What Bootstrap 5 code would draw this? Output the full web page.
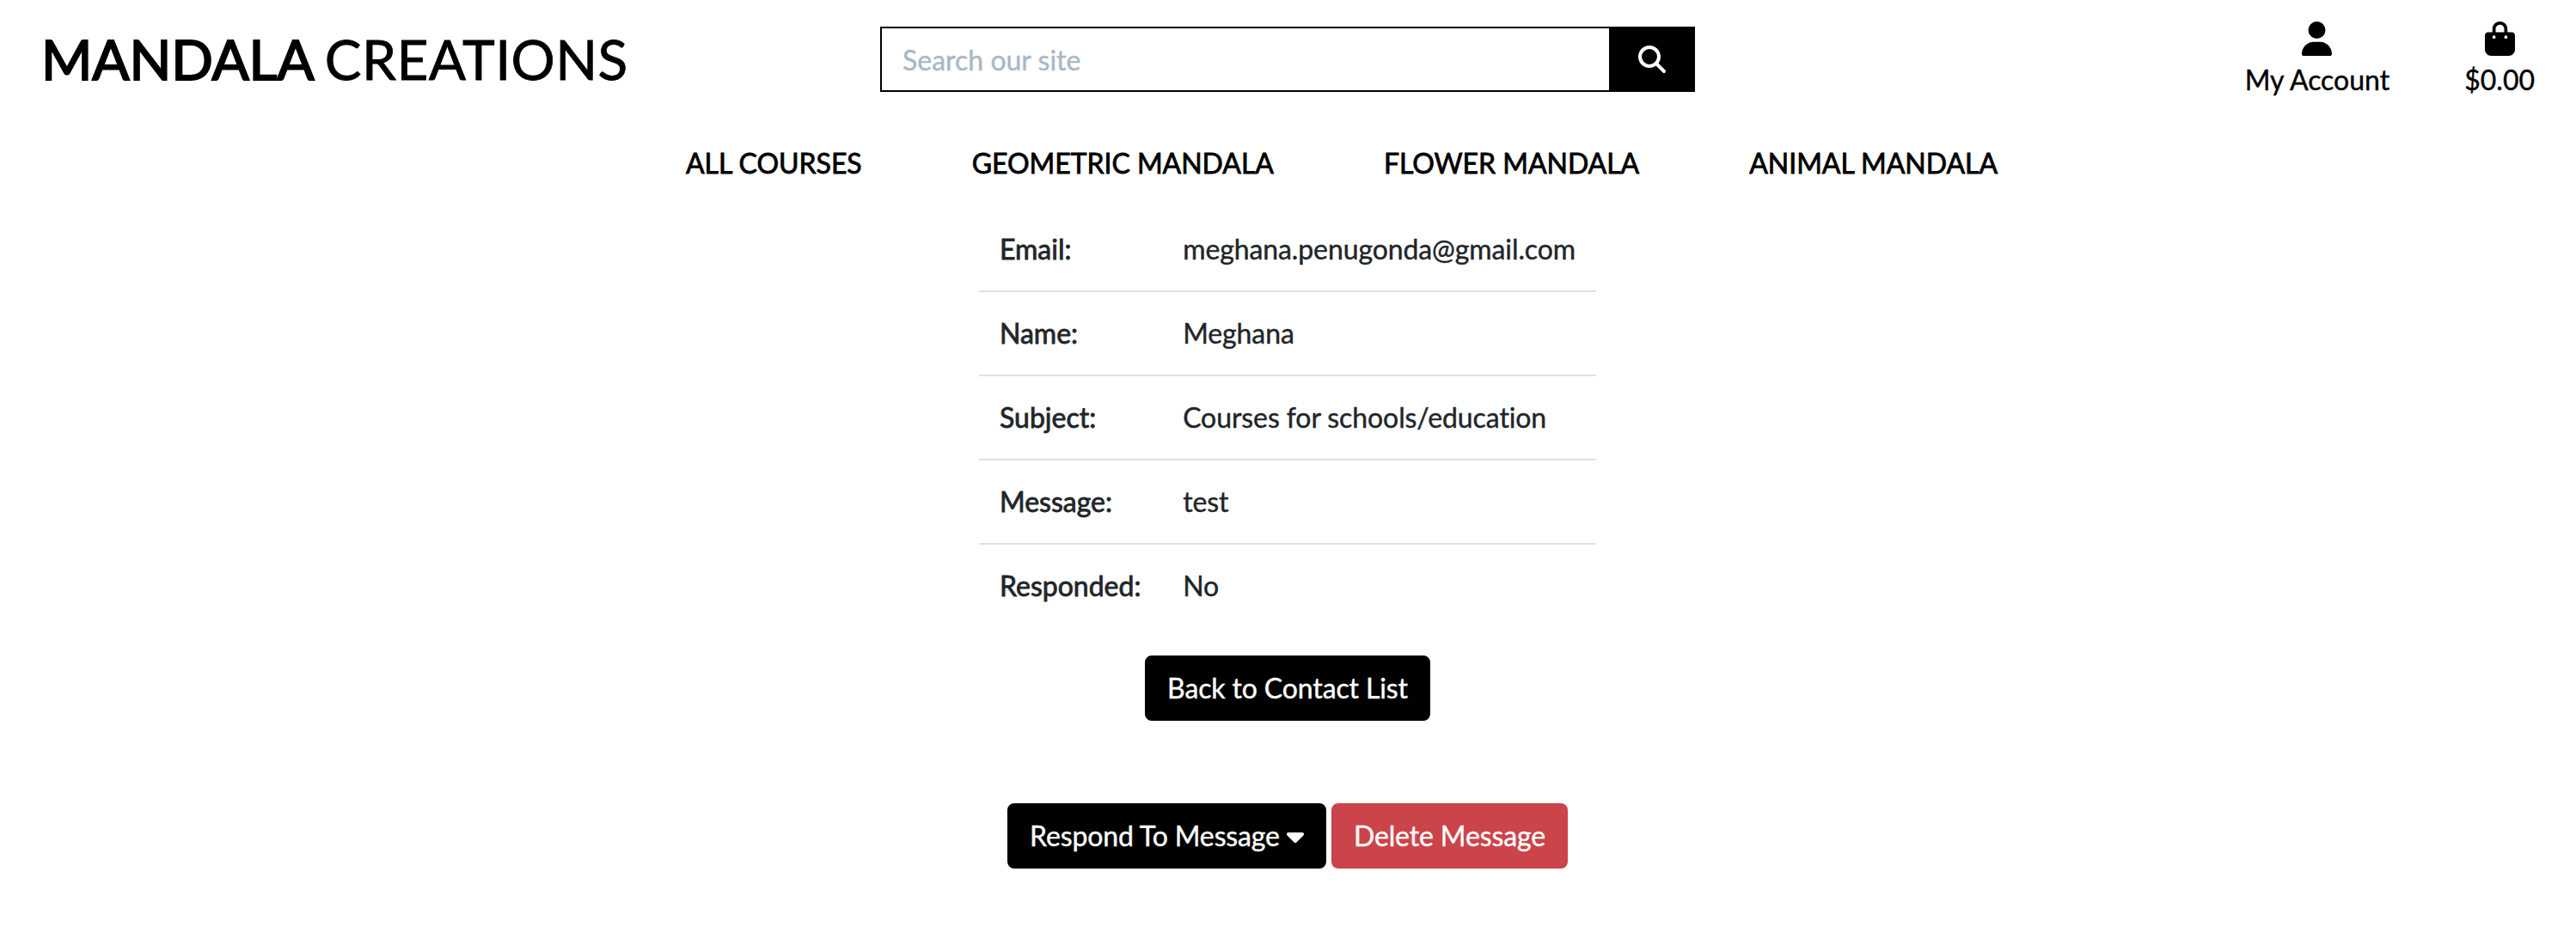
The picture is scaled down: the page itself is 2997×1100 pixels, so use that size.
<!DOCTYPE html>
<html lang="en">
<head>
<meta charset="utf-8">
<meta name="viewport" content="width=device-width, initial-scale=1">
<title>Mandala Creations</title>
<link href="https://cdn.jsdelivr.net/npm/bootstrap@5.3.0/dist/css/bootstrap.min.css" rel="stylesheet">
<style>
html { font-size: 32px; }
body { font-family: Lato, sans-serif; color: #212529; background: #fff; overflow-x: hidden; font-variant-ligatures: none; -webkit-text-stroke: .4px currentColor; }
svg { fill: currentColor; display: block; }
.heavy { font-weight: 400; -webkit-text-stroke: .8px currentColor; }
.top-bar { height: 141px; padding: 0 48px; }
.brand-link { font-size: 64px; line-height: 76px; color: #000; padding-top: 31px; white-space: nowrap; word-spacing: -4.5px; letter-spacing: .4px; -webkit-text-stroke-width: .8px; }
.brand-link .heavy { -webkit-text-stroke-width: 2px; letter-spacing: -.15px; }
.side-area { flex: 1 1 0; min-width: 0; }
.search-form { width: 948px; padding-top: 31px; margin-right: 1px; }
.search-form .form-control { height: 76px; border: 2px solid #000; border-right: 0; border-radius: 0; padding: 12px 24px; }
.search-form .form-control::placeholder { color: #aab7c4; opacity: 1; }
.search-form .btn { width: 100px; margin: 0; border: 0; border-radius: 0; }
.account-links { padding-top: 25px; gap: 87px; }
.account-links a { color: #000; line-height: 48px; }
.account-links svg { width: 35px; height: 40px; margin-bottom: 4px; }
.main-nav { height: 101px; padding: 25px 0 0 798px; gap: 128px; letter-spacing: -.04px; }
.main-nav a { color: #000; line-height: 48px; white-space: nowrap; }
.message-detail { padding-right: 1px; }
.detail-table { width: 718px; margin-bottom: 31px; }
.detail-table > tbody > tr > * { padding: 24px; border-width: 0 0 2px; border-color: #dee2e6; line-height: 48px; white-space: nowrap; color: #212529; }
.detail-table > tbody > tr:last-child > * { border-color: transparent; }
.detail-table th { width: 214px; }
.detail-table td { letter-spacing: -.1px; }
.action-btn { border-width: 2px; border-radius: 8px; line-height: 48px; padding: 12px 24px; white-space: nowrap; letter-spacing: -.13px; }
.btn-ink, .btn-ink:hover { background: #000; border-color: #000; color: #fff; }
.btn-remove, .btn-remove:hover { background: #cb444a; border-color: #cb444a; color: #fff; }
.caret { width: 20px; height: 32px; }
.reply-actions { gap: 6px; }
</style>
</head>
<body>
<header>
  <div class="top-bar d-flex align-items-start">
    <div class="side-area">
      <a href="#" class="brand-link d-block text-decoration-none"><span class="heavy">MANDALA</span> CREATIONS</a>
    </div>
    <form class="search-form">
      <div class="input-group">
        <input class="form-control" type="text" placeholder="Search our site" aria-label="Search our site">
        <button class="btn btn-ink d-flex align-items-center justify-content-center" type="button" aria-label="Search">
          <svg width="32" height="32" viewBox="0 0 512 512"><path d="M416 208c0 45.9-14.9 88.3-40 122.7L502.6 457.4c12.5 12.5 12.5 32.8 0 45.3s-32.8 12.5-45.3 0L330.7 376c-34.4 25.2-76.8 40-122.7 40C93.1 416 0 322.9 0 208S93.1 0 208 0S416 93.1 416 208zM208 352a144 144 0 1 0 0-288 144 144 0 1 0 0 288z"/></svg>
        </button>
      </div>
    </form>
    <div class="side-area account-links d-flex justify-content-end">
      <a href="#" class="d-flex flex-column align-items-center text-decoration-none">
        <svg viewBox="0 0 448 512"><path d="M224 256A128 128 0 1 0 224 0a128 128 0 1 0 0 256zm-45.7 48C79.8 304 0 383.8 0 482.3C0 498.7 13.3 512 29.7 512H418.3c16.4 0 29.7-13.3 29.7-29.7C448 383.8 368.2 304 269.7 304H178.3z"/></svg>
        My Account
      </a>
      <a href="#" class="d-flex flex-column align-items-center text-decoration-none">
        <svg viewBox="0 0 448 512"><path d="M160 112c0-35.3 28.7-64 64-64s64 28.7 64 64v48H160V112zm-48 48H48c-26.5 0-48 21.5-48 48V416c0 53 43 96 96 96H352c53 0 96-43 96-96V208c0-26.5-21.5-48-48-48H336V112C336 50.1 285.9 0 224 0S112 50.1 112 112v48zm24 48a24 24 0 1 1 0 48 24 24 0 1 1 0-48zm152 24a24 24 0 1 1 48 0 24 24 0 1 1 -48 0z"/></svg>
        $0.00
      </a>
    </div>
  </div>
  <nav class="main-nav d-flex align-items-start">
    <a href="#" class="heavy text-decoration-none">ALL COURSES</a>
    <a href="#" class="heavy text-decoration-none">GEOMETRIC MANDALA</a>
    <a href="#" class="heavy text-decoration-none">FLOWER MANDALA</a>
    <a href="#" class="heavy text-decoration-none">ANIMAL MANDALA</a>
  </nav>
</header>
<main class="message-detail d-flex flex-column align-items-center">
  <table class="table detail-table">
    <tbody>
      <tr><th class="heavy" scope="row">Email:</th><td>meghana.penugonda@gmail.com</td></tr>
      <tr><th class="heavy" scope="row">Name:</th><td>Meghana</td></tr>
      <tr><th class="heavy" scope="row">Subject:</th><td>Courses for schools/education</td></tr>
      <tr><th class="heavy" scope="row">Message:</th><td>test</td></tr>
      <tr><th class="heavy" scope="row">Responded:</th><td>No</td></tr>
    </tbody>
  </table>
  <a href="#" class="btn btn-ink action-btn">Back to Contact List</a>
  <div class="reply-actions d-flex mt-5">
    <a href="#" class="btn btn-ink action-btn d-flex align-items-center">Respond To Message&nbsp;<svg class="caret" viewBox="0 0 320 512"><path d="M137.4 374.6c12.5 12.5 32.8 12.5 45.3 0l128-128c9.2-9.2 11.9-22.9 6.9-34.9s-16.6-19.8-29.6-19.8L32 192c-12.9 0-24.6 7.8-29.6 19.8s-2.2 25.7 6.9 34.9l128 128z"/></svg></a>
    <a href="#" class="btn btn-remove action-btn">Delete Message</a>
  </div>
</main>
<script src="https://cdn.jsdelivr.net/npm/bootstrap@5.3.0/dist/js/bootstrap.bundle.min.js"></script>
</body>
</html>
